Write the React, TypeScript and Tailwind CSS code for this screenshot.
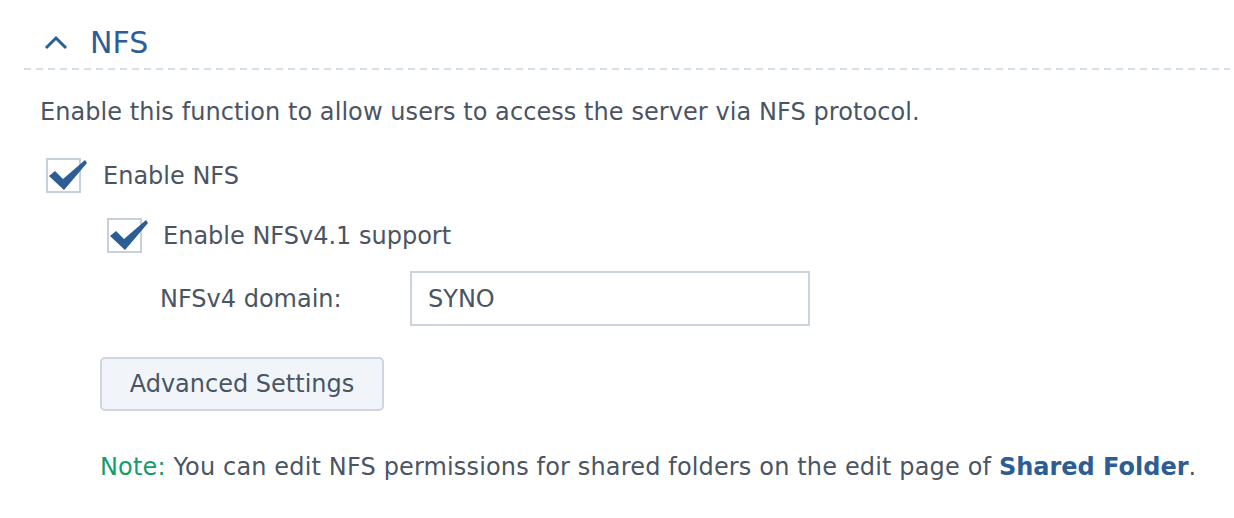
import React from "react";

function Check() {
  return (
    <div className="relative w-[35px] h-[35px] border-2 border-[#c6cfda] bg-white shrink-0">
      <svg className="absolute left-[-2px] top-[-2px] overflow-visible" width="44" height="36" viewBox="0 0 44 36">
        <path d="M3 18 L9 13 L17 21 L39 2 L41 5 L18 32 Z" fill="#2c5e95" />
      </svg>
    </div>
  );
}

export default function App() {
  return (
    <div
      className="w-[1234px] h-[518px] bg-white text-[#4a5563] text-[24px] leading-[28px]"
      style={{ fontFamily: '"DejaVu Sans", Verdana, sans-serif' }}
    >
      <div className="pl-[24px] pr-[4px] pt-[24px]">
        <div className="flex items-center h-[38px] pl-[20px]">
          <svg width="24" height="16" viewBox="0 0 24 16" className="mr-[22px]">
            <path d="M2 13 L12 3 L22 13" fill="none" stroke="#2c5e95" strokeWidth="3" />
          </svg>
          <span className="text-[30px] text-[#2c5e95] leading-[38px]">NFS</span>
        </div>
        <div className="mt-[6px] h-[2px] bg-[linear-gradient(to_right,#d5dfea_7px,transparent_7px)] bg-[length:12px_2px]" />
      </div>
      <div className="pl-[40px] pt-[28px] tracking-[0.07px]">
        Enable this function to allow users to access the server via NFS protocol.
      </div>
      <div className="pl-[46px] pt-[32px] flex items-center gap-[22px]">
        <Check />
        <span>Enable NFS</span>
      </div>
      <div className="pl-[107px] pt-[25px] flex items-center gap-[21px]">
        <Check />
        <span>Enable NFSv4.1 support</span>
      </div>
      <div className="pl-[160px] pt-[18px] flex items-center">
        <span className="w-[250px]">NFSv4 domain:</span>
        <div className="w-[400px] h-[55px] border-2 border-[#cbd3dd] flex items-center pl-[16px]">
          SYNO
        </div>
      </div>
      <div className="pl-[100px] pt-[31px]">
        <button className="w-[284px] h-[54px] rounded-[5px] border-2 border-[#cdd6e1] bg-[#f1f5fa] text-[24px] text-[#4a5563] flex items-center justify-center">
          Advanced Settings
        </button>
      </div>
      <div className="pl-[100px] pt-[42px] tracking-[0.15px]">
        <span className="text-[#169b6b]">Note:</span> You can edit NFS permissions for shared folders on the edit page of{" "}
        <span className="font-bold text-[#2c5e95] tracking-normal">Shared Folder</span>.
      </div>
    </div>
  );
}
